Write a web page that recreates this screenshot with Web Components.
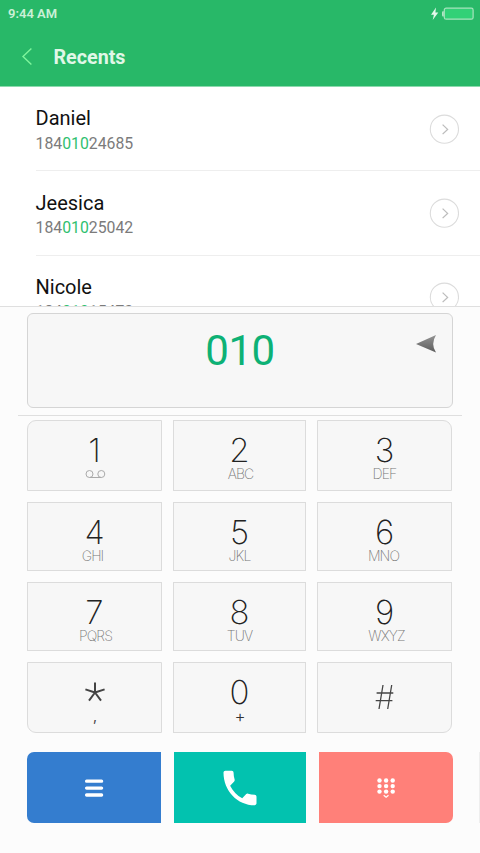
<!DOCTYPE html>
<html lang="en">
<head>
<meta charset="utf-8">
<title>Recents</title>
<style>
html,body{margin:0;height:853px;width:480px;overflow:hidden;background:#fff;font-family:Roboto,"Liberation Sans",sans-serif}
</style>
</head>
<body>
<dialer-app></dialer-app>
<script>
function define(name, html) {
  customElements.define(name, class extends HTMLElement {
    constructor() {
      super();
      const t = document.createElement('template');
      t.innerHTML = html;
      this.attachShadow({mode: 'open'}).append(t.content.cloneNode(true));
    }
  });
}

define('status-bar', `
<style>
:host{display:flex;justify-content:space-between;align-items:center;height:27px;padding:0 6px 0 8px;font:600 13px/27px Roboto,sans-serif;color:#cbf0d7;box-sizing:border-box}
svg{display:block}
</style>
<span><slot></slot></span>
<svg width="44" height="16" viewBox="0 0 44 16">
<path d="M6 1.5 L1 8.7 H3.9 L2.7 14 L8.3 6.6 H5.4 Z" fill="#e4f8ea"/>
<path d="M13.8 5.2 H13 Q12 5.2 12 6.5 V9 Q12 10.6 13 10.6 H13.8Z" fill="#b4e7c7"/>
<rect x="14.3" y="2.2" width="28.8" height="11" rx="1.8" fill="#31d177" stroke="#a6e3bd" stroke-width="1.2"/>
</svg>`);

define('title-bar', `
<style>
:host{display:flex;align-items:center;height:59px;padding-left:20px;box-sizing:border-box;font:700 19.7px/24px Roboto,sans-serif;color:#e0f7e7}
svg{display:block;margin-right:16.5px}
span{margin-top:2px}
</style>
<svg width="17" height="22" viewBox="0 0 17 22"><path d="M11.4 2.6 L3 10.6 L11.4 18.6" fill="none" stroke="#7ef59c" stroke-width="1.4"/></svg>
<span><slot></slot></span>`);

define('contact-row', `
<style>
:host{display:flex;justify-content:space-between;height:84.3px;margin-left:35.5px;padding-right:21px;box-sizing:border-box;border-bottom:1px solid #eeeeee;flex:none}
.name{font-size:20px;line-height:24px;color:#111;margin-top:19.4px}
.num{font-size:15.8px;line-height:20px;color:#7b7b7b;margin-top:3.4px}
::slotted(b){font-weight:400;color:#2fbf6f}
svg{display:block;margin-top:26.5px}
</style>
<div><div class="name"><slot name="name"></slot></div><div class="num"><slot></slot></div></div>
<svg width="30" height="30" viewBox="0 0 30 30" fill="none"><circle cx="15.4" cy="15.2" r="14.1" stroke="#dcdcdc" stroke-width="1.1"/><path d="M13.6 10.6 L18.6 15.4 L13.6 20.1" stroke="#bcbcbc" stroke-width="1.3"/></svg>`);

define('number-display', `
<style>
:host{display:flex;justify-content:center;position:relative;height:95px;margin:6px 27px 0;box-sizing:border-box;border:1px solid #d5d5d5;border-radius:6px;background:#f7f7f7;color:#0db175;font:400 42px/50px Roboto,sans-serif;letter-spacing:-.5px}
span{margin-top:12px}
svg{position:absolute;right:15.5px;top:20px}
</style>
<span><slot></slot></span>
<svg width="21" height="20" viewBox="0 0 21 20"><defs><linearGradient id="g" x2="0" y2="1"><stop offset="0" stop-color="#949494"/><stop offset="1" stop-color="#5c5c5c"/></linearGradient></defs><path d="M0 10 L20 1 Q14.4 10 20 18.6 Z" fill="url(#g)"/></svg>`);

define('dial-key', `
<style>
:host{display:flex;flex-direction:column;align-items:center;box-sizing:border-box;border:1px solid #dcdcdc;background:#f7f7f7;padding-top:12.8px;font-family:Inter,"Liberation Sans",sans-serif}
.d{font-weight:200;font-size:33px;line-height:32px;height:32px;color:#222}
.l{font-weight:200;font-size:14px;line-height:16px;letter-spacing:-.9px;color:#777;transform:translateX(var(--lx,0px))}
::slotted(svg){display:block}
</style>
<div class="d"><slot name="digit"></slot></div><div class="l"><slot></slot></div>`);

define('key-pad', `
<style>
:host{display:grid;grid-template-columns:135px 133px 135px;grid-template-rows:71px 69px 69px 71px;column-gap:11px;row-gap:11px;padding:4px 0 0 27px}
::slotted(:nth-child(1)){border-top-left-radius:9px}
::slotted(:nth-child(3)){border-top-right-radius:9px}
::slotted(:nth-child(10)){border-bottom-left-radius:9px}
::slotted(:nth-child(12)){border-bottom-right-radius:9px}
</style><slot></slot>`);

define('action-button', `
<style>
:host{display:flex;align-items:center;justify-content:center;height:71px;background:var(--bg)}
::slotted(svg){display:block}
</style><slot></slot>`);

define('dialer-app', `
<style>
:host{display:flex;flex-direction:column;width:480px;height:853px;overflow:hidden}
header{background:#28b868;height:86px;border-bottom:1px solid #8cdaae;box-sizing:content-box;flex:none}
.list{height:219px;overflow:hidden;display:flex;flex-direction:column;flex:none;background:#fff}
.panel{flex:1;background:#fcfcfc;border-top:1px solid #dfdfdf}
hr{border:0;height:1px;background:#dfdfdf;margin:7px 18px 0}
.actions{display:grid;grid-template-columns:134px 132px 134px 1px;column-gap:13px;padding:19px 0 0 27px}
.actions action-button:first-child{border-radius:7px 0 0 7px}
.actions action-button:nth-child(3){border-radius:0 7px 7px 0}
.actions i{background:#eee;margin-left:13px;width:1px}
</style>
<header><status-bar>9:44 AM</status-bar><title-bar>Recents</title-bar></header>
<div class="list">
<contact-row><span slot="name">Daniel</span>184<b>010</b>24685</contact-row>
<contact-row><span slot="name">Jeesica</span>184<b>010</b>25042</contact-row>
<contact-row><span slot="name">Nicole</span>184<b>010</b>15473</contact-row>
</div>
<div class="panel">
<number-display>010</number-display>
<hr>
<key-pad>
<dial-key><span slot="digit">1</span><svg width="22" height="16" viewBox="0 0 22 16" fill="none" stroke="#aaa" stroke-width="1"><circle cx="5.5" cy="8" r="3.5"/><circle cx="17.3" cy="8" r="3.5"/><path d="M5.5 11.5 H17.3"/></svg></dial-key>
<dial-key style="--lx:1px"><span slot="digit">2</span>ABC</dial-key>
<dial-key><span slot="digit">3</span>DEF</dial-key>
<dial-key style="--lx:-2px"><span slot="digit">4</span>GHI</dial-key>
<dial-key><span slot="digit">5</span>JKL</dial-key>
<dial-key style="--lx:-1px"><span slot="digit">6</span>MNO</dial-key>
<dial-key style="--lx:1px"><span slot="digit">7</span>PQRS</dial-key>
<dial-key><span slot="digit">8</span>TUV</dial-key>
<dial-key style="--lx:2px"><span slot="digit">9</span>WXYZ</dial-key>
<dial-key><svg slot="digit" width="24" height="32" viewBox="0 0 24 32" stroke="#444" stroke-width="2"><path d="M12 16.5V6.5M12 16.5L2.4 13.4M12 16.5L6 24.7M12 16.5L18 24.7M12 16.5L21.6 13.4"/></svg><span style="color:#444;font-size:14px;font-weight:400">,</span></dial-key>
<dial-key><span slot="digit">0</span><span style="color:#333;font-size:17px;font-weight:300">+</span></dial-key>
<dial-key><svg slot="digit" width="24" height="36" viewBox="0 0 24 36" stroke="#444" stroke-width="1.3"><path d="M10 9L6 33M18.7 9L14.7 33M3.6 17H20.3M2.7 24.6H19.4"/></svg></dial-key>
</key-pad>
<div class="actions">
<action-button style="--bg:#347dcf"><svg width="20" height="20" viewBox="0 0 20 20" stroke="#fff" stroke-width="3.3" stroke-linecap="round"><path d="M2.6 3.2H17.6M2.6 10.1H17.6M2.6 17H17.6"/></svg></action-button>
<action-button style="--bg:#02c2af"><svg width="44" height="46" viewBox="0 0 24 24" preserveAspectRatio="none" fill="#fff"><path d="M6.62 10.79c1.44 2.83 3.76 5.14 6.59 6.59l2.2-2.2c.27-.27.67-.36 1.02-.24 1.12.37 2.33.57 3.57.57.55 0 1 .45 1 1V20c0 .55-.45 1-1 1-9.39 0-17-7.61-17-17 0-.55.45-1 1-1h3.5c.55 0 1 .45 1 1 0 1.25.2 2.45.57 3.57.11.35.03.74-.25 1.02l-2.2 2.2z"/></svg></action-button>
<action-button style="--bg:#ff8079"><svg width="20" height="22" viewBox="0 0 20 22" fill="#fff"><circle cx="3.5" cy="3.5" r="2.2"/><circle cx="10.1" cy="3.5" r="2.2"/><circle cx="16.7" cy="3.5" r="2.2"/><circle cx="3.5" cy="9.1" r="2.2"/><circle cx="10.1" cy="9.1" r="2.2"/><circle cx="16.7" cy="9.1" r="2.2"/><circle cx="3.5" cy="14.6" r="2.2"/><circle cx="10.1" cy="14.6" r="2.2"/><circle cx="16.7" cy="14.6" r="2.2"/><path d="M7.7 18.3L10.1 20.3L12.5 18.3" fill="none" stroke="#fff" stroke-width="1.2"/></svg></action-button>
<i></i>
</div>
</div>`);
</script>
</body>
</html>
